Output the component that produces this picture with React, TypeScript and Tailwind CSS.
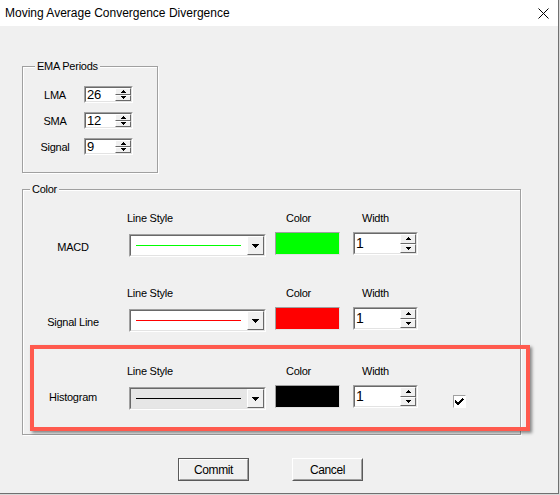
import React from "react";

// Classic Win32 dialog: MACD settings

const sunkenOuter = "border border-t-[#a0a0a0] border-l-[#a0a0a0] border-b-white border-r-white";
const sunkenInner = "border border-t-[#696969] border-l-[#696969] border-b-[#e3e3e3] border-r-[#e3e3e3]";
const raised = "border border-t-white border-l-white border-b-[#696969] border-r-[#696969] bg-[#f0f0f0]";

const Arrow = ({ up, big }: { up?: boolean; big?: boolean }) =>
  big ? (
    <svg width="7" height="4" viewBox="0 0 7 4" shapeRendering="crispEdges">
      <path d="M0 0H7L3.5 4Z" fill="#000" />
    </svg>
  ) : (
    <svg width="5" height="3" viewBox="0 0 5 3" shapeRendering="crispEdges">
      <path d={up ? "M0 3H5L2.5 0Z" : "M0 0H5L2.5 3Z"} fill="#000" />
    </svg>
  );

const SpinBtn = ({ up }: { up?: boolean }) => (
  <div className={`flex flex-1 items-center justify-center ${raised}`}>
    <Arrow up={up} />
  </div>
);

const Spin = ({ value, size }: { value: string; size: "sm" | "lg" }) => (
  <div className={`flex ${sunkenOuter} ${size === "sm" ? "h-[17px] w-[49px]" : "h-[23px] w-[65px]"}`}>
    <div className={`flex flex-1 bg-white ${sunkenInner}`}>
      <div
        className={`flex-1 pl-[1px] text-[13px] leading-none text-black ${
          size === "sm" ? "pt-0" : "pt-[2px] text-[14px]"
        }`}
      >
        {value}
      </div>
      <div className="flex w-[16px] flex-col">
        <SpinBtn up />
        <SpinBtn />
      </div>
    </div>
  </div>
);

const Combo = ({ line, disabled }: { line: string; disabled?: boolean }) => (
  <div className={`flex h-[23px] w-[137px] ${sunkenOuter}`}>
    <div className={`flex flex-1 items-center ${sunkenInner} ${disabled ? "bg-[#e6e6e6]" : "bg-white"}`}>
      <div className="flex flex-1 items-center pl-[5px] pr-[6px]">
        <div className={`h-0 w-full border-t ${line}`} />
      </div>
      <div className={`flex h-full w-[17px] items-center justify-center ${raised}`}>
        <Arrow big />
      </div>
    </div>
  </div>
);

const Swatch = ({ color }: { color: string }) => (
  <div
    className={`h-[23px] w-[65px] border border-t-[#a0a0a0] border-l-[#a0a0a0] border-b-[#e3e3e3] border-r-[#e3e3e3] ${color}`}
  />
);

type RowProps = {
  label: string;
  labelTop: string;
  top: string;
  line: string;
  color: string;
  disabled?: boolean;
  checkbox?: boolean;
};

const ColorRow = ({ label, labelTop, top, line, color, disabled, checkbox }: RowProps) => (
  <div className={`flex items-start ${top}`}>
    <div className={`mr-[6px] w-[100px] text-center leading-[12px] ${labelTop}`}>{label}</div>
    <div className="w-[137px]">
      <div className="-ml-[2px] h-[12px] leading-[12px]">Line Style</div>
      <div className="mt-[10px]">
        <Combo line={line} disabled={disabled} />
      </div>
    </div>
    <div className="ml-[9px] w-[65px]">
      <div className="h-[12px] pl-[11px] leading-[12px]">Color</div>
      <div className="mt-[8px]">
        <Swatch color={color} />
      </div>
    </div>
    <div className="ml-[13px] w-[65px]">
      <div className="h-[12px] pl-[9px] leading-[12px]">Width</div>
      <div className="mt-[8px]">
        <Spin value="1" size="lg" />
      </div>
    </div>
    {checkbox && (
      <div className={`ml-[35px] mt-[30px] flex h-[13px] w-[13px] items-center justify-center bg-white ${sunkenOuter}`}>
        <svg width="9" height="8" viewBox="0 0 9 8" shapeRendering="crispEdges">
          <path d="M0 3L3 6L8 1" fill="none" stroke="#000" strokeWidth="2" />
        </svg>
      </div>
    )}
  </div>
);

const EMA_ROWS = [
  { label: "LMA", value: "26" },
  { label: "SMA", value: "12" },
  { label: "Signal", value: "9" },
];

const Button = ({ children, primary }: { children: React.ReactNode; primary?: boolean }) => (
  <div
    className={`h-[23px] w-[71px] ${
      primary ? "border border-[#5a5a5a]" : "border border-t-white border-l-white border-b-[#5a5a5a] border-r-[#5a5a5a]"
    }`}
  >
    <div
      className={`flex h-full w-full items-center justify-center bg-[#f0f0f0] text-[12px] tracking-[-0.4px] ${
        primary
          ? "border border-t-white border-l-white border-b-[#a0a0a0] border-r-[#a0a0a0]"
          : "border border-t-[#f0f0f0] border-l-[#f0f0f0] border-b-[#a0a0a0] border-r-[#a0a0a0]"
      }`}
    >
      {children}
    </div>
  </div>
);

export default function App() {
  return (
    <div className="h-[495px] w-[560px] bg-[#d8d8d8] font-['Liberation_Sans',Arial,sans-serif] text-black">
      <div className="relative flex h-[494px] w-[559px] flex-col border-r border-b border-[#707070] bg-[#f0f0f0] text-[11px] tracking-[-0.25px]">
        {/* Title bar */}
        <div className="flex h-[26px] items-center bg-white pl-[5px] pr-[9px]">
          <span className="flex-1 text-[12px] tracking-normal">Moving Average Convergence Divergence</span>
          <svg width="11" height="11" viewBox="0 0 11 11" className="mt-[1px]">
            <path d="M0.5 0.5L10.5 10.5M10.5 0.5L0.5 10.5" stroke="#000" strokeWidth="1" />
          </svg>
        </div>

        {/* EMA Periods */}
        <fieldset className="ml-[22px] mt-[34px] h-[113px] w-[136px] border border-[#a0a0a0] pl-[7px] pt-[14px] shadow-[1px_1px_0_#fff,inset_1px_1px_0_#fff]">
          <legend className="ml-[5px] bg-[#f0f0f0] px-[2px] leading-[12px]">EMA Periods</legend>
          <div className="flex flex-col gap-[9px]">
            {EMA_ROWS.map((r) => (
              <div key={r.label} className="flex items-center">
                <div className="w-[50px] text-center leading-[12px]">{r.label}</div>
                <div className="ml-[4px]">
                  <Spin value={r.value} size="sm" />
                </div>
              </div>
            ))}
          </div>
        </fieldset>

        {/* Color */}
        <fieldset className="ml-[22px] mt-[10px] h-[252px] w-[499px] border border-[#a0a0a0] shadow-[1px_1px_0_#fff,inset_1px_1px_0_#fff]">
          <legend className="ml-[7px] bg-[#f0f0f0] px-[2px] leading-[12px]">Color</legend>
          <ColorRow label="MACD" labelTop="mt-[29px]" top="mt-[17px]" line="border-[#00ff00]" color="bg-[#00ff00]" />
          <ColorRow label="Signal Line" labelTop="mt-[29px]" top="mt-[30px]" line="border-[#ff0000]" color="bg-[#ff0000]" />
          <ColorRow
            label="Histogram"
            labelTop="mt-[26px]"
            top="mt-[33px]"
            line="border-black"
            color="bg-black"
            disabled
            checkbox
          />
        </fieldset>

        {/* Buttons */}
        <div className="ml-[178px] mt-[23px] flex gap-[43px]">
          <Button primary>Commit</Button>
          <Button>Cancel</Button>
        </div>

        {/* Highlight annotation */}
        <div className="pointer-events-none absolute left-[30px] top-[345px] h-[86px] w-[500px] border-4 border-[#ff5a4e] shadow-[2px_2px_3px_rgba(0,0,0,0.45)]" />
      </div>
    </div>
  );
}
